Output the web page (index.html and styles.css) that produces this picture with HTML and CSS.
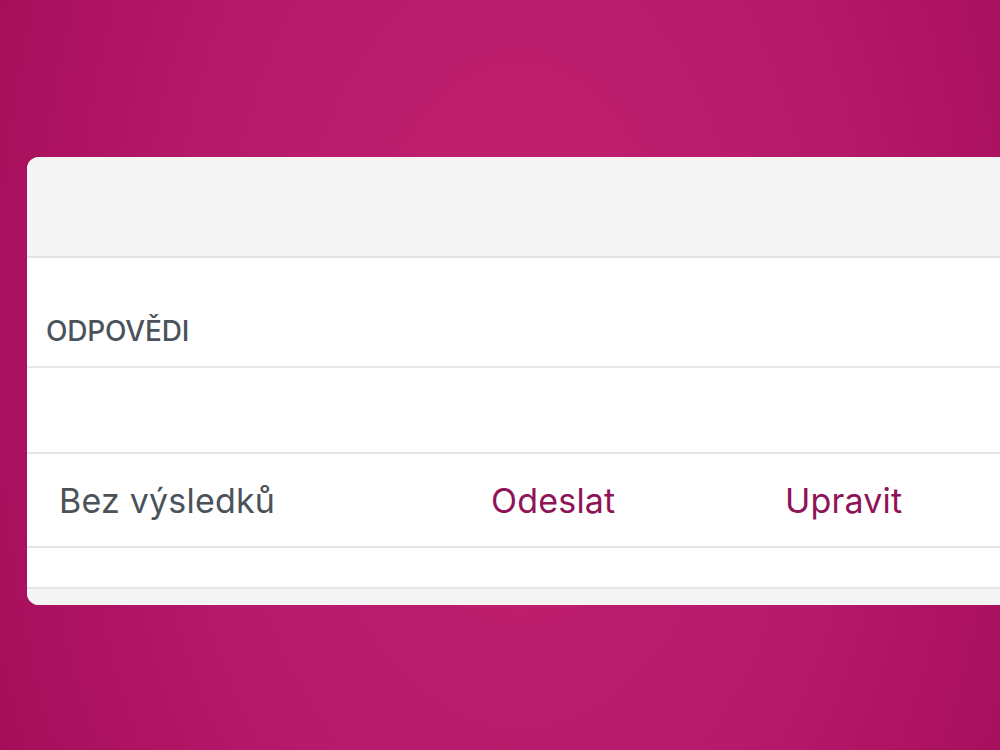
FILE: index.html
```html
<!DOCTYPE html>
<html lang="cs">
<head>
    <meta charset="UTF-8">
    <meta name="viewport" content="width=device-width, initial-scale=1.0">
    <title>Odpovědi</title>
    <link rel="stylesheet" href="styles.css">
</head>
<body>
    <div class="card">
        <div class="card-header"></div>
        <div class="section-title">
            <h2>ODPOVĚDI</h2>
        </div>
        <div class="row row-empty"></div>
        <div class="row result">
            <span class="label">Bez výsledků</span>
            <a href="#" class="action">Odeslat</a>
            <a href="#" class="action">Upravit</a>
        </div>
        <div class="row row-spacer"></div>
        <div class="card-footer"></div>
    </div>
</body>
</html>
```

FILE: styles.css
```css
html, body {
    height: 100%;
}
body {
    margin: 0;
    padding: 157px 0 0 27px;
    box-sizing: border-box;
    overflow: hidden;
    font-family: Inter, "Noto Sans", sans-serif;
    background: radial-gradient(ellipse 62% 140% at 52% 45%, #c2226f 0%, #b5196a 55%, #a30b56 100%);
}
.card {
    width: 1000px;
    background: #ffffff;
    border-radius: 12px;
    overflow: hidden;
}
.card-header {
    height: 99px;
    background: #f5f5f5;
    border-bottom: 2px solid #e3e3e5;
}
.section-title {
    height: 108px;
    display: flex;
    align-items: flex-end;
    padding-left: 19px;
    border-bottom: 2px solid #e7e7e9;
}
.section-title h2 {
    margin: 0 0 18px 0;
    font-size: 28px;
    font-weight: 500;
    color: #4b535a;
    letter-spacing: -0.2px;
}
.row {
    border-bottom: 2px solid #e5e5e7;
}
.row-empty {
    height: 84px;
}
.result {
    height: 92px;
    display: grid;
    grid-template-columns: 432px 294px 1fr;
    align-items: center;
    padding-left: 32px;
    font-size: 34px;
    letter-spacing: 0.2px;
}
.label {
    color: #4b535a;
}
.action {
    color: #8e1457;
    text-decoration: none;
}
.row-spacer {
    height: 39px;
}
.card-footer {
    height: 16px;
    background: #f5f5f6;
}
```
